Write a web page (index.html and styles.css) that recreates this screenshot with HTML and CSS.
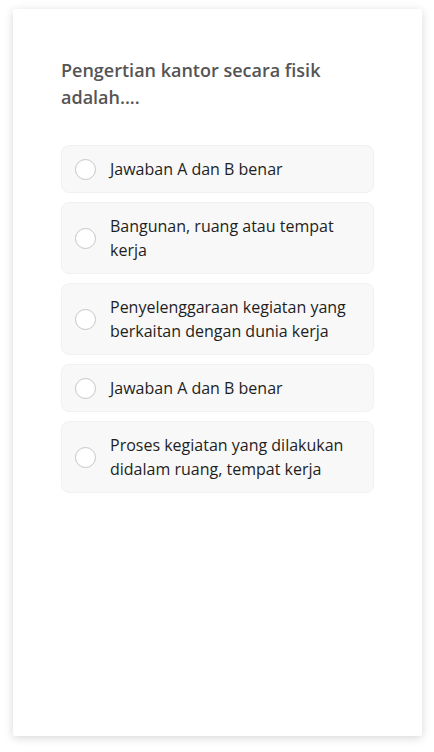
FILE: index.html
```html
<!DOCTYPE html>
<html lang="id">
<head>
<meta charset="utf-8">
<title>Soal</title>
<link rel="stylesheet" href="styles.css">
</head>
<body>
<div class="card">
  <h1 class="question">Pengertian kantor secara fisik adalah....</h1>
  <div class="options">
    <label class="option"><span class="radio"></span><span class="text">Jawaban A dan B benar</span></label>
    <label class="option"><span class="radio"></span><span class="text">Bangunan, ruang atau tempat kerja</span></label>
    <label class="option"><span class="radio"></span><span class="text">Penyelenggaraan kegiatan yang berkaitan dengan dunia kerja</span></label>
    <label class="option"><span class="radio"></span><span class="text">Jawaban A dan B benar</span></label>
    <label class="option"><span class="radio"></span><span class="text">Proses kegiatan yang dilakukan didalam ruang, tempat kerja</span></label>
  </div>
</div>
</body>
</html>
```
FILE: styles.css
```css
html, body {
  margin: 0;
  padding: 0;
  background: #ffffff;
}
body {
  font-family: "Open Sans", "Noto Sans", sans-serif;
  padding: 9px 12px 16px 13px;
}
.card {
  box-sizing: border-box;
  height: 727px;
  background: #ffffff;
  border-radius: 2px;
  box-shadow: 0 2px 10px rgba(0, 0, 0, 0.16);
  padding: 48px 48px;
}
.question {
  margin: 0 0 34px 0;
  font-size: 18px;
  line-height: 27px;
  font-weight: 600;
  color: #555555;
}
.options {
  display: flex;
  flex-direction: column;
  gap: 9px;
}
.option {
  display: flex;
  align-items: center;
  gap: 14px;
  padding: 11px 13px;
  background: #f8f8f8;
  border: 1px solid #f1f1f1;
  border-radius: 8px;
}
.radio {
  flex: none;
  box-sizing: border-box;
  width: 21px;
  height: 21px;
  border-radius: 50%;
  border: 1.5px solid #c6c6c6;
  background: #ffffff;
}
.text {
  font-size: 16px;
  line-height: 24px;
  color: #1e1e1e;
}
```
